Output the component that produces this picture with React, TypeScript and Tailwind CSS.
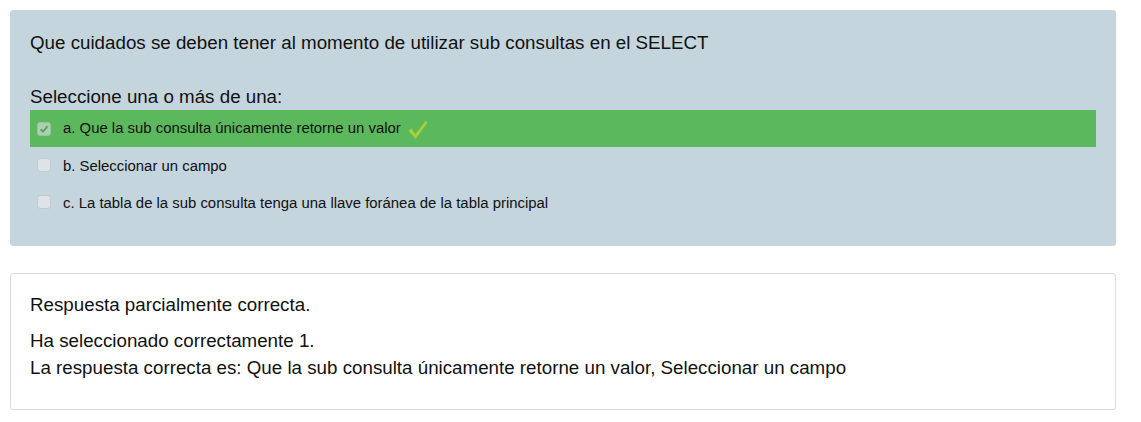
import React from "react";

function Box({ checked }: { checked?: boolean }) {
  return (
    <span className="relative inline-flex h-[14px] w-[14px] shrink-0 items-center justify-center rounded-[3px] border border-[#c3cbd0] bg-[#dde3e7] mt-[-6px]">
      {checked && (
        <svg width="10" height="10" viewBox="0 0 10 10">
          <path d="M1.5 5.2 L4 7.6 L8.6 2.2" fill="none" stroke="#6f8a6f" strokeWidth="2" />
        </svg>
      )}
    </span>
  );
}

function Option({ label, checked, correct }: { label: string; checked?: boolean; correct?: boolean }) {
  return (
    <div className={`flex h-[37px] items-center pl-[7px] ${correct ? "bg-[#5cb85c]" : ""}`}>
      <span className={checked ? "opacity-60" : ""}>
        <Box checked={checked} />
      </span>
      <span className="ml-[12px] text-[14.9px] text-[#111]">{label}</span>
      {correct && (
        <svg className="ml-[6px] mt-[2px]" width="22" height="22" viewBox="0 0 22 22">
          <path d="M1.5 11.5 L4.5 9.5 L8.3 15.2 L18.8 1.8 L20.5 3.8 L8.6 20 Z" fill="#a6d13a" />
        </svg>
      )}
    </div>
  );
}

export default function App() {
  return (
    <div className="bg-white p-[10px] pr-[25px] text-[#111]" style={{ fontFamily: '"Liberation Sans", Arial, sans-serif' }}>
      <div className="rounded-[3px] bg-[#c5d5de] px-[20px] pt-[20px] pb-[24px]">
        <div className="text-[18.75px] leading-[26px]">
          Que cuidados se deben tener al momento de utilizar sub consultas en el SELECT
        </div>
        <div className="mt-[28px] text-[18.75px] leading-[26px]">Seleccione una o más de una:</div>
        <Option label="a. Que la sub consulta únicamente retorne un valor" checked correct />
        <div className="pt-px">
          <Option label="b. Seleccionar un campo" />
          <Option label="c. La tabla de la sub consulta tenga una llave foránea de la tabla principal" />
        </div>
      </div>
      <div className="mt-[27px] h-[137px] rounded-[3px] border border-[#dcdcdc] px-[19px] pt-[18px] text-[18.75px]">
        <div className="leading-[26px]">Respuesta parcialmente correcta.</div>
        <div className="mt-[9px] leading-[27px]">
          Ha seleccionado correctamente 1.
          <br />
          La respuesta correcta es: Que la sub consulta únicamente retorne un valor, Seleccionar un campo
        </div>
      </div>
    </div>
  );
}
